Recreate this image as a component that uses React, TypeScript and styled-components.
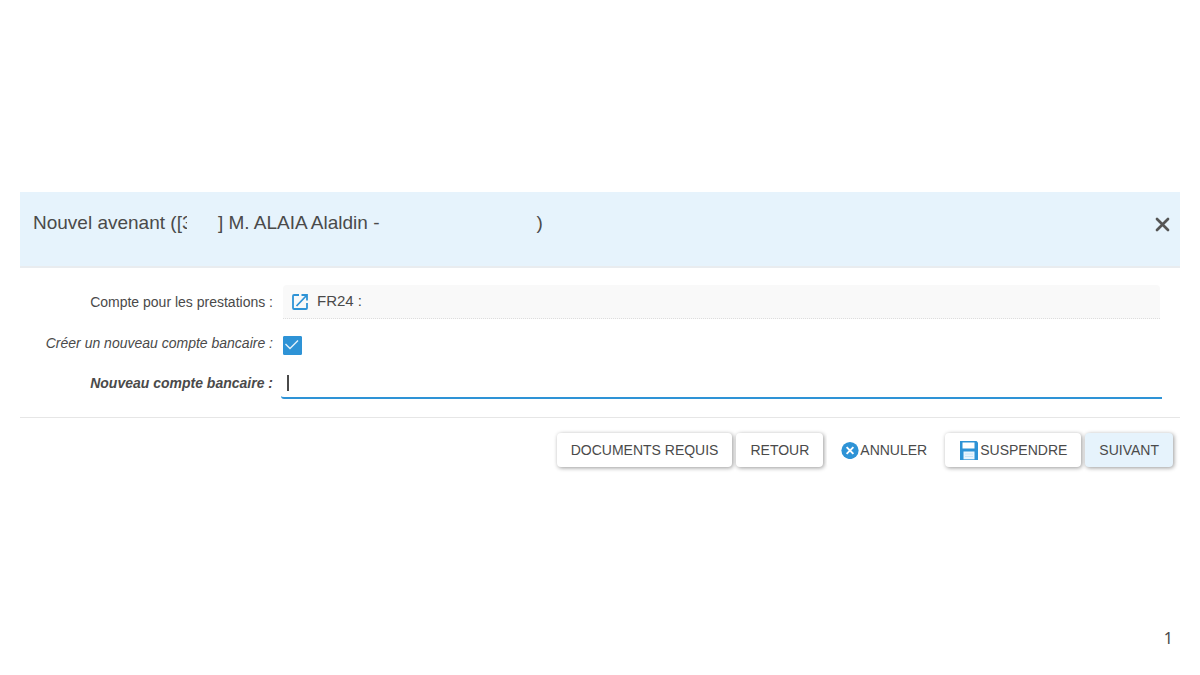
import React, { useState } from "react";
import styled, { createGlobalStyle } from "styled-components";

const GlobalStyle = createGlobalStyle`
  *, *::before, *::after { box-sizing: border-box; }
  body {
    margin: 0;
    background: #fff;
    color: #4a4a4a;
    font-family: "Liberation Sans", Arial, sans-serif;
  }
`;

const Page = styled.div`
  display: flex;
  flex-direction: column;
  min-height: 100vh;
  padding: 192px 20px 27px;
`;

const Dialog = styled.section`
  background: #fff;
`;

const Header = styled.header`
  display: flex;
  justify-content: space-between;
  align-items: flex-start;
  padding: 20px 7px 29px 13px;
  background: #e6f3fc;
  border-bottom: 2px solid #e9ecef;
`;

const Title = styled.h1`
  display: flex;
  margin: 0;
  font-size: 19px;
  font-weight: 400;
  line-height: 22px;
  white-space: pre;
`;

const Masked = styled.span<{ $shown: number; $width: number }>`
  display: inline-block;
  flex: none;
  width: ${(p) => p.$shown}px;
  margin-right: ${(p) => p.$width - p.$shown}px;
  overflow: hidden;
  white-space: nowrap;
`;

const CloseButton = styled.button`
  display: flex;
  padding: 4px 2px;
  border: 0;
  background: none;
  color: #555;
  cursor: pointer;
`;

const Form = styled.form`
  margin: 0;
`;

const Fields = styled.div`
  display: flex;
  flex-direction: column;
  gap: 8px;
  padding: 17px 20px 18px 0;
`;

const Row = styled.div`
  display: grid;
  grid-template-columns: 253px 1fr;
  column-gap: 10px;
  align-items: center;
  min-height: 32px;
`;

const Label = styled.label<{ $italic?: boolean; $bold?: boolean }>`
  font-size: 14px;
  line-height: 20px;
  text-align: right;
  font-style: ${(p) => (p.$italic ? "italic" : "normal")};
  font-weight: ${(p) => (p.$bold ? 700 : 400)};
`;

const AccountField = styled.output`
  display: flex;
  align-items: center;
  gap: 8px;
  height: 34px;
  padding: 0 8px;
  background: #f9f9f9;
  border-bottom: 1px dotted #ddd;
  border-radius: 4px 4px 0 0;
  font-size: 15px;
  line-height: 20px;
`;

const AccountLink = styled.a`
  display: flex;
  color: #2e93d6;
`;

const AccountText = styled.span`
  display: flex;
  padding-bottom: 2px;
  white-space: pre;
`;

const CheckWrap = styled.span`
  display: grid;
  width: 19px;
  margin-top: 4px;
  > * { grid-area: 1 / 1; }
  svg { pointer-events: none; }
`;

const Checkbox = styled.input`
  appearance: none;
  width: 19px;
  height: 19px;
  margin: 0;
  border: 1px solid #2e93d6;
  border-radius: 1px;
  background: #fff;
  &:checked { background: #2e93d6; }
`;

const InputWrap = styled.div`
  position: relative;
  margin: 0 -2px;
`;

const TextInput = styled.input`
  display: block;
  width: 100%;
  height: 32px;
  padding: 0 6px;
  border: 0;
  border-bottom: 2px solid #2e93d6;
  border-radius: 0 0 0 3px;
  outline: 0;
  background: transparent;
  color: inherit;
  font: 15px/20px "Liberation Sans", Arial, sans-serif;
  caret-color: transparent;
`;

const Caret = styled.span`
  position: absolute;
  top: 8px;
  left: 6px;
  width: 2px;
  height: 16px;
  background: #4a4a4a;
`;

const Actions = styled.footer`
  display: flex;
  justify-content: flex-end;
  flex-wrap: wrap;
  gap: 4px;
  padding: 15px 7px;
  border-top: 1px solid #e6e6e6;
`;

const Button = styled.button<{ $variant?: "flat" | "primary" }>`
  display: flex;
  align-items: center;
  gap: 1px;
  height: 34px;
  padding: 0 14px;
  border: 0;
  border-radius: 4px;
  background: ${(p) => (p.$variant === "primary" ? "#e6f3fc" : "#fff")};
  box-shadow: ${(p) =>
    p.$variant === "flat" ? "none" : "1px 1px 4px rgba(0, 0, 0, 0.4)"};
  color: inherit;
  font: 14px/20px "Liberation Sans", Arial, sans-serif;
  text-transform: uppercase;
  cursor: pointer;
`;

const PageNumber = styled.div`
  margin-top: auto;
  padding-right: 7px;
  text-align: right;
  font: 16px/20px "Noto Sans", sans-serif;
`;

const CloseIcon = () => (
  <svg width="17" height="17" viewBox="0 0 17 17" aria-hidden="true">
    <path d="M3 3L14 14M14 3L3 14" stroke="currentColor" strokeWidth="2.7" strokeLinecap="round" />
  </svg>
);

const OpenIcon = () => (
  <svg width="18" height="18" viewBox="0 0 18 18" fill="none" stroke="currentColor" aria-hidden="true">
    <path d="M8 2H3Q2 2 2 3V15Q2 16 3 16H15Q16 16 16 15V10" strokeWidth="1.8" />
    <path d="M10.5 2H16V7.5M16 2L5.5 13" strokeWidth="1.8" />
  </svg>
);

const CheckIcon = () => (
  <svg width="19" height="19" viewBox="0 0 19 19" fill="none" aria-hidden="true">
    <path d="M2.5 8L7 12.5L15 4.5" stroke="#e4f2fb" strokeWidth="1.4" />
  </svg>
);

const CancelIcon = () => (
  <svg width="18" height="18" viewBox="0 0 18 18" aria-hidden="true">
    <circle cx="9" cy="9.5" r="8.6" fill="#2e93d6" />
    <path d="M5.6 6.1L12.4 12.9M12.4 6.1L5.6 12.9" stroke="#fff" strokeWidth="1.9" />
  </svg>
);

const SaveIcon = () => (
  <svg width="20" height="20" viewBox="0 0 20 20" aria-hidden="true">
    <path d="M1 1H17.5L19 2.5V20H1Z" fill="#2e93d6" />
    <path d="M3.5 2.5H15.5V8.5H3.5Z" fill="#fff" />
    <path d="M4.5 11.5H15.5V19.3H4.5Z" fill="#eaf5fd" />
    <path d="M6 14H14M6 16.5H14" stroke="#c8e4f6" strokeWidth="1" />
  </svg>
);

export default function App() {
  const [create, setCreate] = useState(true);
  const [account, setAccount] = useState("");

  return (
    <>
      <GlobalStyle />
      <Page>
        <Dialog aria-labelledby="dialog-title">
          <Header>
            <Title id="dialog-title">
              <span>Nouvel avenant ([</span>
              <Masked $shown={5} $width={36}>3</Masked>
              <span>] M. ALAIA Alaldin -</span>
              <Masked $shown={0} $width={157} />
              <span>)</span>
            </Title>
            <CloseButton type="button" aria-label="Fermer">
              <CloseIcon />
            </CloseButton>
          </Header>
          <Form onSubmit={(e) => e.preventDefault()}>
            <Fields>
              <Row>
                <Label htmlFor="current-account">Compte pour les prestations :</Label>
                <AccountField id="current-account">
                  <AccountLink href="#compte" aria-label="Ouvrir le compte">
                    <OpenIcon />
                  </AccountLink>
                  <AccountText>{"FR24 :"}</AccountText>
                </AccountField>
              </Row>
              <Row>
                <Label htmlFor="create-account" $italic>
                  Créer un nouveau compte bancaire :
                </Label>
                <CheckWrap>
                  <Checkbox
                    id="create-account"
                    type="checkbox"
                    checked={create}
                    onChange={(e) => setCreate(e.target.checked)}
                  />
                  {create && <CheckIcon />}
                </CheckWrap>
              </Row>
              <Row>
                <Label htmlFor="new-account" $italic $bold>
                  Nouveau compte bancaire :
                </Label>
                <InputWrap>
                  <TextInput
                    id="new-account"
                    type="text"
                    value={account}
                    onChange={(e) => setAccount(e.target.value)}
                  />
                  {account === "" && <Caret />}
                </InputWrap>
              </Row>
            </Fields>
            <Actions>
              <Button type="button">Documents requis</Button>
              <Button type="button">Retour</Button>
              <Button type="button" $variant="flat">
                <CancelIcon />
                Annuler
              </Button>
              <Button type="button">
                <SaveIcon />
                Suspendre
              </Button>
              <Button type="submit" $variant="primary">Suivant</Button>
            </Actions>
          </Form>
        </Dialog>
        <PageNumber>1</PageNumber>
      </Page>
    </>
  );
}
